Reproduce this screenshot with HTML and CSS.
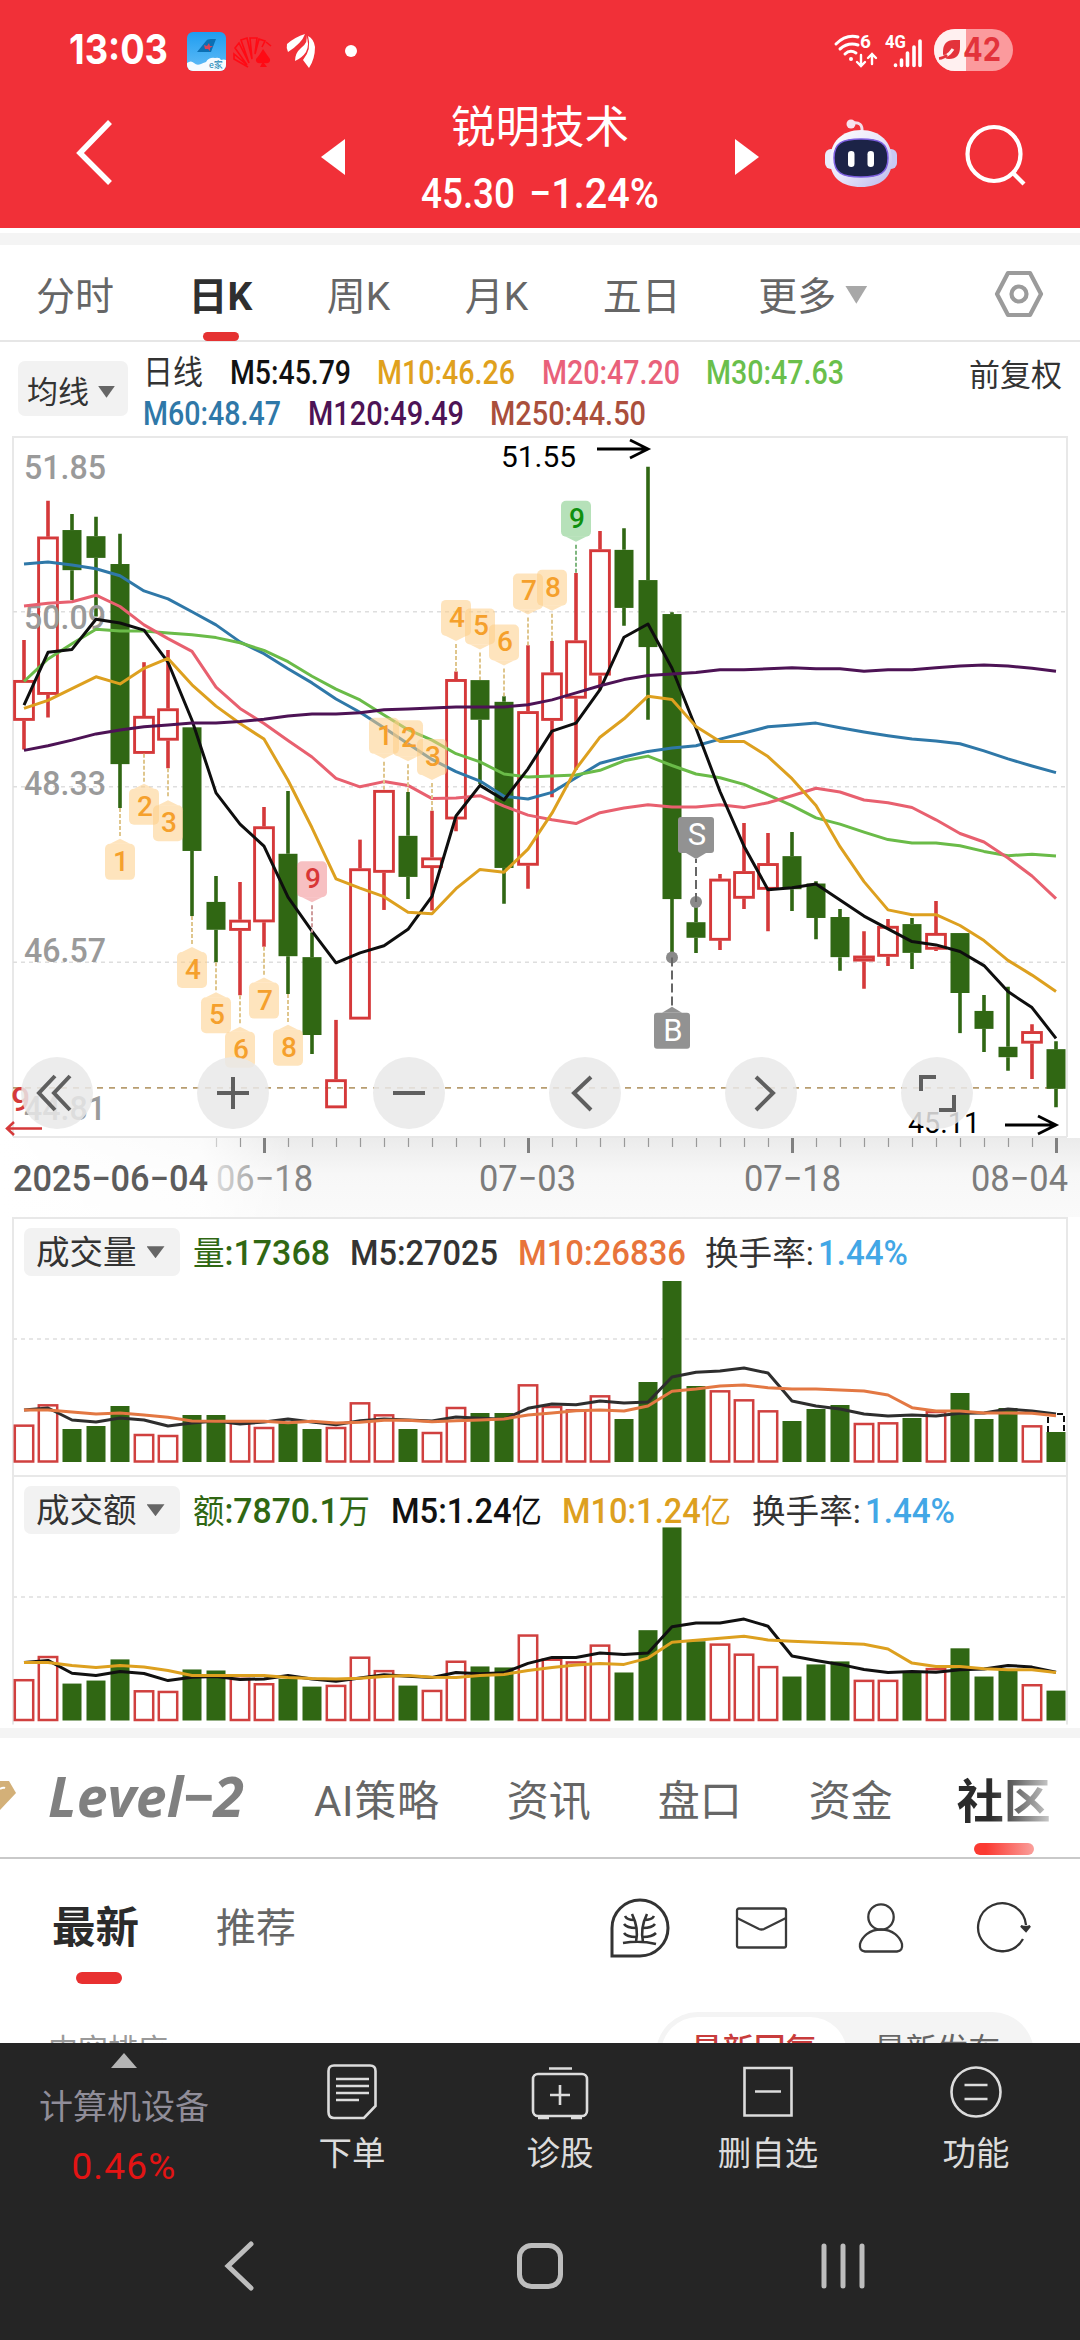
FILE: index.html
```html
<!DOCTYPE html>
<html lang="zh-CN">
<head>
<meta charset="utf-8">
<title>锐明技术 日K</title>
<link rel="stylesheet" href="styles.css">
</head>
<body>
<header class="top">
  <div class="status">
    <svg class="t clock" width="100" height="42"><text x="0" y="36" textLength="99" lengthAdjust="spacingAndGlyphs">13:03</text></svg>
    <svg class="app-icon" width="39" height="39" viewBox="0 0 39 39"><defs><linearGradient id="sky" x1="0" y1="0" x2="0" y2="1"><stop offset="0" stop-color="#1f9df0"/><stop offset="1" stop-color="#63bdf7"/></linearGradient><clipPath id="rc"><rect width="39" height="39" rx="6"/></clipPath></defs><g clip-path="url(#rc)"><rect width="39" height="39" fill="url(#sky)"/><path d="M10 20 19 9Q20 7 24 7H29L24 20Z" fill="#0b6fb4"/><path d="M17 13l3 1 2-3 1 3 3 0-3 2 0 3-2-2-3 0z" fill="#d8455a"/><path d="M0 31q4-3 7 0 3 3 7 1 2-1 5-2 3-5 9-4 5-1 6 2 3-1 5 0V39H0Z" fill="#f5fbff"/><text x="22" y="36" font-size="9" fill="#1a86b5">e家</text></g></svg>
    <svg class="fan" width="40" height="32" viewBox="0 0 40 32" fill="none" stroke="#ff0a14" stroke-width="1.600"><path d="M15 30 1 22V17L14 28 2 11 6 6 16 26 8 3 14 1 19 22 17 1H24L22 17 26 2 32 4 29 10M33 5l5 4"/><path d="M30 12Q26 19 23 22 22 27 29 26L27 30H34L31 26Q38 27 37 22 34 18 30 12Z" fill="#ff0a14" stroke="none"/></svg>
    <svg class="feather" width="29" height="34" viewBox="0 0 29 34" fill="#fff"><path d="M0 10Q8 3 18 0 15 9 1 18Q-1 14 0 10Z"/><path d="M19 1Q22 8 14 14 8 19 8 27 15 24 19 18 23 10 19 1Z"/><path d="M21 2Q27 5 28 13 28 25 22 34L16 26Q25 15 21 2Z"/></svg>
    <i class="dot"></i>
    <span class="grow"></span>
    <svg class="wifi" width="43" height="34" viewBox="0 0 43 34" fill="none" stroke="#fff" stroke-width="3" stroke-linecap="round"><path d="M2 10Q12 0 24 3M6 15Q14 8 24 11M11 20Q16 15 22 19"/><circle cx="17" cy="25" r="2" fill="#fff" stroke="none"/><path d="M27 21V31M23 28l4 4 4-4M38 30V20M34 24l4-4 4 4" stroke-width="2.4"/><text x="26" y="14" class="tiny">6</text></svg>
    <svg class="cell" width="38" height="34" viewBox="0 0 38 34"><text x="0" y="14" class="tiny" textLength="21" lengthAdjust="spacingAndGlyphs">4G</text><path d="M10.500 31v.5M16.500 26v5.500M22.500 19v12.500M29 13v18.500M35 7v24.500" stroke="#fff" stroke-width="3.600" stroke-linecap="round"/></svg>
    <svg class="battery" width="79" height="42" viewBox="0 0 79 42"><clipPath id="bc"><rect width="79" height="42" rx="21"/></clipPath><g clip-path="url(#bc)"><rect width="79" height="42" fill="#fb9a9d"/><rect width="32" height="42" fill="#fff0f0"/></g><path d="M9 23Q9 11 20 11H26V18Q26 30 15 30 10 30 9 25Z" fill="#e3333b"/><path d="M5 29Q14 28 19 20" stroke="#fff0f0" stroke-width="3" fill="none"/><path d="M5 29.500Q10 29 13 26" stroke="#e3333b" stroke-width="2.500" fill="none"/><text x="29" y="32" textLength="38" lengthAdjust="spacingAndGlyphs">42</text></svg>
  </div>
  <div class="titlebar">
    <svg class="back" width="38" height="66" viewBox="0 0 38 66"><path d="M34 2 4 33 34 63" fill="none" stroke="#fff" stroke-width="5.500"/></svg>
    <svg class="prev" width="24" height="36" viewBox="0 0 24 36"><path d="M24 0V36L0 18Z" fill="#fff"/></svg>
    <div class="title">
      <h1>锐明技术</h1>
      <svg class="t price" width="240" height="40"><text x="0" y="33" textLength="94" lengthAdjust="spacingAndGlyphs">45.30</text><text x="108" y="33" textLength="130" lengthAdjust="spacingAndGlyphs">−1.24%</text></svg>
    </div>
    <svg class="next" width="24" height="36" viewBox="0 0 24 36"><path d="M0 0V36L24 18Z" fill="#fff"/></svg>
    <svg class="robot" width="73" height="70" viewBox="0 0 73 70"><defs><linearGradient id="rb" x1="0" y1="0" x2="1" y2="1"><stop offset="0" stop-color="#fff"/><stop offset=".5" stop-color="#e8e6fa"/><stop offset="1" stop-color="#b9b8ec"/></linearGradient></defs><path d="M27 4Q38 2 37 13" fill="none" stroke="#f3dbe8" stroke-width="3"/><circle cx="26" cy="5" r="4.500" fill="#f8e3ee"/><rect x="0" y="30" width="12" height="20" rx="6" fill="#e9ecfb"/><rect x="60" y="30" width="12" height="20" rx="6" fill="#c9c9f4"/><path d="M36 11C55 11 67 23 67 41 67 59 55 68 36 68 17 68 5 59 5 41 5 23 17 11 36 11Z" fill="url(#rb)"/><path d="M36 20C55 20 63 24 63 39 63 54 55 58 36 58 17 58 9 54 9 39 9 24 17 20 36 20Z" fill="#1c2347" stroke="#7d5fe0" stroke-width="1.500"/><rect x="23" y="32" width="6.500" height="16" rx="3.200" fill="#fff"/><rect x="42.500" y="32" width="6.500" height="16" rx="3.200" fill="#fff"/></svg>
    <svg class="search" width="62" height="64" viewBox="0 0 62 64" fill="none" stroke="#fff" stroke-width="4.200"><ellipse cx="29" cy="31" rx="26.500" ry="27"/><path d="M48 50 59 61"/></svg>
  </div>
</header>
<nav class="periods">
  <span>分时</span><span class="on">日K</span><span>周K</span><span>月K</span><span>五日</span>
  <span class="more">更多<i class="caret"></i></span>
  <svg class="gear" width="50" height="48" viewBox="0 0 50 48" fill="none" stroke="#9b9b9b" stroke-width="4.200" stroke-linejoin="round"><path d="M14 3H36L47 24 36 45H14L3 24Z"/><circle cx="25" cy="24" r="7.500"/></svg>
</nav>
<section class="ma">
  <button class="drop">均线<i class="caret"></i></button>
  <div class="ma-list" id="ma"></div>
  <span class="adjust">前复权</span>
</section>
<section class="kline">
  <svg id="kline" width="1080" height="702"></svg>
  <div class="tools">
    <svg viewBox="0 0 72 72"><path d="M34 19 18 36 34 53M49 19 33 36 49 53"/></svg>
    <svg viewBox="0 0 72 72"><path d="M36 20V52M20 36H52"/></svg>
    <svg viewBox="0 0 72 72"><path d="M20 36H52"/></svg>
    <svg viewBox="0 0 72 72"><path d="M42 20 25 36 42 53"/></svg>
    <svg viewBox="0 0 72 72"><path d="M31 20 48 36 31 53"/></svg>
    <svg viewBox="0 0 72 72"><path d="M20 34V20H35M38 53H53V38"/></svg>
  </div>
</section>
<section class="axis"><svg id="axis" width="1080" height="79"></svg></section>
<section class="panel vol">
  <svg id="vol" width="1080" height="258"></svg>
  <div class="legend"><button class="drop">成交量<i class="caret"></i></button><svg class="t" id="vol-legend" width="880" height="40"></svg></div>
</section>
<section class="panel amt">
  <svg id="amt" width="1080" height="253"></svg>
  <div class="legend"><button class="drop">成交额<i class="caret"></i></button><svg class="t" id="amt-legend" width="880" height="40"></svg></div>
</section>
<nav class="sections">
  <svg class="gem" width="17" height="34" viewBox="0 0 17 34"><path d="M0 2H9L16 14 0 31Z" fill="#d3b078"/><path d="M0 10Q3 8 5 9" stroke="#fff" stroke-width="2" fill="none"/></svg>
  <svg class="t level" width="200" height="50"><text x="0" y="42" textLength="196" lengthAdjust="spacingAndGlyphs">Level−2</text></svg>
  <span>AI策略</span><span>资讯</span><span>盘口</span><span>资金</span><span class="on">社区</span>
</nav>
<section class="community">
  <div class="sub">
    <span class="on">最新</span><span>推荐</span><b class="grow"></b>
    <svg width="60" height="60" viewBox="0 0 60 60" fill="none" stroke="#333" stroke-width="3"><path d="M2 58V30A28 28 0 1 1 30 58Z"/><path d="M22 16Q29 30 26 44M37 16Q30 30 33 44M13 45Q30 42 46 46M15 18Q17 22 24 22M14 26Q17 30 26 30M14 35Q17 39 26 39M44 18Q42 22 34 22M45 26Q42 30 33 30M46 35Q42 39 33 39" stroke-width="2.600"/></svg>
    <svg width="53" height="42" viewBox="0 0 53 42" fill="none" stroke="#3a3a3a" stroke-width="2.300"><rect x="2" y="1.500" width="49" height="39" rx="2"/><path d="M2 11 24 22Q26.500 23 29 22L51 11"/></svg>
    <svg width="46" height="50" viewBox="0 0 46 50" fill="none" stroke="#3a3a3a" stroke-width="2.300"><circle cx="23" cy="14" r="12.700"/><path d="M23 26.500C11 26.500 4 34 2 41Q1 48 7 48.500H39Q45 48 44 41C42 34 35 26.500 23 26.500Z"/></svg>
    <svg width="53" height="50" viewBox="0 0 53 50" fill="none" stroke="#333" stroke-width="2.300"><path d="M45 36A24 24 0 1 1 48 22"/><path d="M43 23Q48 25 52 23L48 28Z" fill="#333"/></svg>
  </div>
  <div class="sort"><span>内容排序</span><div class="pill"><b>最新回复</b><em>最新发布</em></div></div>
</section>
<footer class="bottom">
  <div class="board"><i></i><span>计算机设备</span><strong>0.46%</strong></div>
  <div class="act"><svg width="62" height="60" viewBox="0 0 62 60"><path d="M13 3.500H49Q54.500 3.500 54.500 9V44L43 56H13Q7.500 56 7.500 50V9Q7.500 3.500 13 3.500ZM15 17H48M15 24H48M15 31H48M15 38H38"/></svg>下单</div>
  <div class="act"><svg width="62" height="60" viewBox="0 0 62 60"><rect x="4" y="12" width="54" height="42" rx="5"/><path d="M20 6.500H43M31 23V43M21 33H41M9 56H20M42 56H53"/></svg>诊股</div>
  <div class="act"><svg width="62" height="60" viewBox="0 0 62 60"><path d="M7.500 6H54.500V53.500H7.500ZM18 29.500H44"/></svg>删自选</div>
  <div class="act"><svg width="62" height="60" viewBox="0 0 62 60"><circle cx="31" cy="30" r="24.500"/><path d="M19.500 23H42.500M19.500 37H42.500"/></svg>功能</div>
</footer>
<div class="sysnav">
  <svg width="30" height="50" viewBox="0 0 30 50"><path d="M27 3 4 25 27 47"/></svg>
  <svg width="50" height="50" viewBox="0 0 50 50"><rect x="4.500" y="4.500" width="41" height="41" rx="12"/></svg>
  <svg width="50" height="50" viewBox="0 0 50 50"><path d="M6 5V45M25 5V45M44 5V45"/></svg>
</div>
<script src="charts.js"></script>
</body>
</html>
```
FILE: styles.css
```css
* { box-sizing: border-box; }
body { margin: 0; width: 1080px; height: 2340px; overflow: hidden; background: #fff; color: #666; font-family: Roboto, "Noto Sans CJK SC", sans-serif; }
svg { display: block; flex: none; overflow: visible; }
button { font: inherit; border: 0; margin: 0; }
.grow { flex: 1; }
.t text { fill: currentColor; }

.top { height: 228px; background: #f13038; color: #fff; overflow: hidden; }
.status { display: flex; height: 102px; padding: 0 67px 0 69px; align-items: center; }
.clock { font: 700 41px Inter, sans-serif; margin-top: -4px; }
.app-icon { margin-left: 18px; }
.fan { margin-left: 7px; margin-top: 4px; }
.feather { margin-left: 14px; }
.dot { width: 12px; height: 12px; border-radius: 50%; background: #fff; margin-left: 29px; }
.wifi { margin-right: 8px; }
.tiny { font: 700 19px Roboto; fill: #fff; stroke: none; }
.cell { margin-right: 11px; }
.battery { font: 700 32px Inter, sans-serif; fill: #e3333b; margin-top: -2px; }
.titlebar { display: flex; height: 126px; padding-left: 76px; }
.back { margin-top: 18px; }
.prev { margin: 37px 0 0 207px; }
.title { width: 390px; text-align: center; }
.title h1 { font-size: 44.500px; font-weight: 400; line-height: 50px; margin: 1px 0 0; }
.price { font: 500 42.500px Roboto; margin: 22px 0 0 76px; }
.next { margin-top: 37px; }
.robot { margin: 17px 0 0 66px; }
.search { margin: 21px 0 0 67px; }

.periods { display: flex; gap: 74.500px; height: 114px; padding: 28px 0 0 36px; border-bottom: 2px solid #e6e6e6; box-shadow: inset 0 5px #fff, inset 0 17px #f4f4f4; font-size: 39px; line-height: 82px; }
.periods .on { color: #2f2f2f; font-weight: 700; position: relative; }
.periods .on::after { content: ""; position: absolute; left: 14px; bottom: -1px; width: 36px; height: 9px; border-radius: 5px; background: #e53232; }
.caret { display: inline-block; width: 18px; height: 12px; background: #666; clip-path: polygon(0 0, 100% 0, 50% 100%); vertical-align: middle; }
.periods .more { margin-left: 3px; }
.periods .caret { width: 22px; height: 18px; background: #a8a8a8; margin-left: 9px; margin-top: -10px; }
.gear { margin: 14px 0 0 52px; }

.ma { display: flex; height: 94px; padding-left: 18px; font-size: 31px; color: #333; }
.drop { background: #f2f2f2; border-radius: 7px; color: #333; white-space: nowrap; }
.ma .drop { width: 110px; height: 55px; margin-top: 19px; padding: 2px 0 0 9px; text-align: left; }
.ma .caret { margin: -6px 0 0 9px; width: 17px; }
.ma-list { width: 826px; margin-left: 15px; padding-top: 12px; display: flex; flex-wrap: wrap; align-content: flex-start; gap: 0 26.500px; }
.ma-list svg { font: 500 33.500px Roboto, "Noto Sans CJK SC", sans-serif; }
.adjust { line-height: 46px; padding-top: 11px; white-space: nowrap; }

.kline { height: 702px; position: relative; }
.tools { position: absolute; left: 21px; top: 621px; display: flex; gap: 104px; }
.tools svg { width: 72px; height: 72px; border-radius: 50%; background: rgba(233, 233, 233, .85); fill: none; stroke: #5f5f5f; stroke-width: 4; }
.lab { font: 500 34px Roboto; fill: #9a9a9a; }
.mark { font: 400 30px Roboto; fill: #000; }
.badge { font: 500 28px Roboto; text-anchor: middle; }
.axis { height: 79px; background: linear-gradient(90deg, #fff 0, rgba(255, 255, 255, .8) 200px, rgba(255, 255, 255, 0) 290px), linear-gradient(#ebebeb, #f7f7f7 45%, #fafafa); }
.axis text { font: 400 36px Roboto; fill: #7c7c7c; }
.axis .first { fill: #5c5c5c; font-weight: 500; }
.panel { display: grid; }
.panel > * { grid-area: 1 / 1; }
.vol { height: 258px; }
.amt { height: 253px; }
.legend { display: flex; height: 60px; padding: 11px 0 0 24px; font-size: 33.500px; color: #333; }
.legend .drop { width: 156px; height: 48px; padding: 0 0 0 12px; text-align: left; line-height: 50px; }
.legend .caret { margin: -6px 0 0 10px; }
.legend svg { margin-left: 13px; margin-top: 3px; font: 500 35.500px Roboto, "Noto Sans CJK SC", sans-serif; }
.legend .cn, .ma-list .cn { font-weight: 400; font-size: 33px; }

.sections { display: flex; height: 131px; border-top: 10px solid #f4f4f4; border-bottom: 2px solid #c9c9c9; font-size: 42px; line-height: 128px; white-space: nowrap; gap: 67px; }
.gem { margin-top: 41px; }
.level { font: italic 700 55px "Open Sans"; color: #808080; margin: 37px 0 0 -36px; }
.sections .on { font-size: 47px; font-weight: 700; margin-left: -3px; position: relative; color: transparent; background: linear-gradient(90deg, #2b2b2b 35%, #555 55%, #ccc 100%); background-clip: text; -webkit-background-clip: text; }
.sections .on::after { content: ""; position: absolute; left: 17px; bottom: 2px; width: 60px; height: 12px; border-radius: 6px; background: linear-gradient(90deg, #fb3a32 20%, #faa09c); }
.level + span { margin-left: -1px; letter-spacing: .7px; }

.community { height: 184px; overflow: hidden; }
.sub { display: flex; height: 139px; align-items: center; padding: 0 49px 0 52px; font-size: 40px; }
.sub span { line-height: 134px; }
.sub .on { font-size: 43.500px; font-weight: 700; color: #2b2b2b; position: relative; margin-right: 77px; }
.sub .on::after { content: ""; position: absolute; left: 24px; bottom: 12px; width: 46px; height: 12px; border-radius: 6px; background: #e83030; }
.sub svg { margin-top: -1px; margin-left: 70px; }
.sub svg + svg { margin-left: 65px; }
.sub svg:nth-of-type(3) { margin-left: 70px; }
.sub svg:last-child { margin-left: 74px; }
.sort { display: flex; justify-content: space-between; padding: 14px 46px 0 48px; font-size: 30px; color: #999; }
.pill { display: flex; width: 378px; height: 84px; padding: 5px; border-radius: 42px; background: #f4f4f4; font-size: 31.500px; line-height: 68px; }
.pill b { width: 186px; height: 74px; background: #fff; border-radius: 37px; text-align: center; font-weight: 500; color: #c83c3c; }
.pill em { flex: 1; padding-left: 27px; font-style: normal; color: #666; }
.sort > span { line-height: 76px; }

.bottom { display: grid; grid-template-columns: 248px 208px 208px 208px 208px; height: 165px; background: #252525; color: #dcdcdc; position: relative; }
.board { display: flex; flex-direction: column; align-items: center; padding-top: 10px; color: #908d99; font-size: 34px; line-height: 48px; }
.board i { width: 26px; height: 15px; background: #b5b5b5; clip-path: polygon(50% 0, 100% 100%, 0 100%); }
.board span { margin-top: 15px; }
.board strong { font-weight: 400; font-size: 37px; letter-spacing: 1.2px; color: #e31414; margin-top: 12px; }
.act { display: flex; flex-direction: column; align-items: center; font-size: 33.500px; line-height: 40px; padding-top: 19px; }
.act svg { margin-bottom: 12px; fill: none; stroke: #dcdcdc; stroke-width: 2.600; }
.sysnav { height: 132px; background: #252525; display: flex; padding: 33px 0 0 224px; }
.sysnav svg { fill: none; stroke: #bdbdbd; stroke-width: 5; stroke-linecap: round; }
.sysnav svg:nth-child(2) { margin-left: 261px; }
.sysnav svg:nth-child(3) { margin-left: 253px; }
```
FILE: charts.js
```js
// Draws the candlestick, volume and turnover charts.
const RED = '#d5393a', GREEN = '#306713';
const cx = i => 24 + 24 * i;
const $ = id => document.getElementById(id);

// [rising, wick top, body top, body bottom, wick bottom]
const candles = [
  [1,445,530,616,677],[1,150,226,561,609],[0,178,212,297,360],[0,184,225,271,395],[0,220,284,708,801],
  [1,492,606,686,686],[1,466,590,658,717],[0,630,630,892,1030],[0,945,1000,1059,1128],[1,958,1038,1061,1198],
  [1,799,840,1043,1095],[0,765,898,1115,1195],[0,1065,1117,1282,1322],[1,1250,1376,1437,1437],[1,868,929,1249,1249],
  [1,763,763,938,1017],[0,767,860,947,994],[1,807,906,928,1018],[1,512,528,825,850],[0,530,530,614,750],
  [0,564,576,928,1004],[1,456,596,923,972],[1,447,514,616,778],[1,303,446,569,720],[1,214,253,520,550],
  [0,208,254,377,415],[0,78,318,460,614],[0,386,390,994,1118],[0,1000,1043,1076,1108],[1,941,951,1082,1102],
  [1,833,935,993,1015],[1,854,918,974,1062],[0,852,903,973,1019],[0,956,961,1034,1079],[0,1015,1032,1117,1146],
  [1,1062,1114,1126,1184],[1,1036,1051,1116,1136],[0,1034,1047,1108,1142],[1,998,1066,1101,1104],[0,1066,1066,1193,1278],
  [0,1197,1231,1269,1318],[0,1180,1307,1329,1358],[1,1259,1274,1300,1375],[0,1295,1312,1396,1435]];
const averages = {
  '#2f78a8': [284,280,286,294,309,341,358,385,413,449,474,506,536,570,598,631,665,698,724,744,776,782,768,737,706,693,681,674,669,655,642,629,625,621,631,640,648,655,659,665,680,697,712,726],
  '#6abb48': [533,485,453,422,426,426,430,434,440,451,467,491,522,549,572,604,635,657,686,703,729,735,733,731,721,701,691,711,729,737,751,773,796,822,835,852,868,875,875,881,893,902,899,903],
  '#e8606f': [373,367,364,350,374,413,442,469,545,590,622,658,693,738,756,745,753,781,780,775,797,816,826,834,811,801,794,799,799,794,800,790,775,759,767,784,790,800,826,855,873,907,945,993],
  '#0e0e0e': [583,471,465,401,409,424,492,615,769,835,882,990,1062,1129,1108,1093,1058,988,818,753,784,718,638,621,550,439,411,505,632,766,882,974,970,962,996,1030,1057,1084,1091,1105,1135,1190,1224,1289],
  '#dda01f': [590,573,548,523,538,505,484,540,585,622,655,742,843,951,971,989,1022,1025,972,931,937,888,812,718,651,612,564,571,628,660,660,692,739,796,883,957,1017,1027,1027,1050,1082,1124,1155,1190],
  '#4d1355': [679,669,657,644,636,629,625,621,621,618,613,606,602,602,599,593,591,589,587,587,587,582,572,557,542,529,520,517,514,508,508,506,504,506,506,511,508,508,504,500,498,500,505,511]
};
const line = (vals, y, color, w = 3) =>
  `<polyline fill="none" stroke="${color}" stroke-width="${w}" stroke-linejoin="round" points="${vals.map((v, i) => cx(i) + ',' + y(v).toFixed(1)).join(' ')}"/>`;
const frame = (top, bottom) => `<path d="M13 ${bottom}V${top}H1067V${bottom}" fill="none" stroke="#e8e8e8" stroke-width="2"/>`;
const fit = (x, y, w, s, extra = '') => `<text x="${x}" y="${y}" textLength="${w}" lengthAdjust="spacingAndGlyphs" ${extra}>${s}</text>`;

function drawKline() {
  const y = v => v / 2.119 - 6;
  let s = frame(1, 701) + '<path d="M13 701H1067" stroke="#e8e8e8" stroke-width="2"/>';
  for (const g of [385, 756, 1128]) s += `<path d="M13 ${y(g)}H1066" stroke="#dedede" stroke-width="1.500" stroke-dasharray="4 4"/>`;
  s += `<path d="M13 ${y(1394)}H1066" stroke="#b89d70" stroke-width="1.600" stroke-dasharray="6 6"/>`;
  candles.forEach(([up, a, b, c, d], i) => {
    const x = cx(i), col = up ? RED : GREEN;
    s += `<path d="M${x} ${y(a)}V${y(b)}M${x} ${y(c)}V${y(d)}" stroke="${col}" stroke-width="3.600"/>`;
    s += up ? `<rect x="${x - 9.4}" y="${y(b) + 1.3}" width="18.800" height="${y(c) - y(b) - 2.6}" fill="none" stroke="${RED}" stroke-width="2.900"/>`
            : `<rect x="${x - 9.5}" y="${y(b)}" width="19" height="${y(c) - y(b)}" fill="${GREEN}"/>`;
  });
  // Price scale
  [['51.85', 43], ['50.09', 193], ['48.33', 359], ['46.57', 526], ['44.81', 684]].forEach(([t, py]) => {
    s += fit(24, py, 82, t, 'class="lab"');
  });
  for (const c in averages) s += line(averages[c], y, c);
  // Nine-turn sequence badges: [candle, label, box top, below the bar]
  [[4,1,877,1],[5,2,760,1],[6,3,795,1],[7,4,1106,1],[8,5,1202,1],[9,6,1275,1],[10,7,1171,1],[11,8,1271,1],
   [12,9,914,0],[15,1,610,0],[16,2,615,0],[17,3,655,0],[18,4,360,0],[19,5,378,0],[20,6,412,0],[21,7,304,0],[22,8,296,0],[23,9,150,0]
  ].forEach(([i, n, t, below]) => {
    const x = cx(i), top = y(t), kind = n < 9 ? 0 : i === 12 ? 1 : 2;
    const bg = ['rgba(253,205,134,.55)', 'rgba(240,130,134,.5)', 'rgba(110,195,115,.5)'][kind];
    const fg = ['#f5a02c', '#d93636', '#0f900f'][kind];
    const dash = ['#dfc68d', '#cf9c9c', '#7fb67f'][kind];
    const from = below ? y(candles[i][4]) : top + 44, to = below ? top - 7 : y(candles[i][1]);
    const tip = below ? `M${x - 10} ${top}L${x} ${top - 5}L${x + 10} ${top}` : `M${x - 10} ${top + 36}L${x} ${top + 41}L${x + 10} ${top + 36}`;
    s += `<path d="M${x} ${from}V${to}" stroke="${dash}" stroke-width="2" stroke-dasharray="4 2"/>`;
    s += `<rect x="${x - 15}" y="${top}" width="30" height="36" rx="5" fill="${bg}"/><path d="${tip}" fill="${bg}"/>`;
    s += `<text class="badge" x="${x + 1}" y="${top + 27}" fill="${fg}">${n}</text>`;
  });
  // Buy and sell points
  [['B', 27, 1235, 1118], ['S', 28, 820, 1000]].forEach(([n, i, t, dot]) => {
    const x = cx(i), top = y(t), b = n === 'B';
    s += `<circle cx="${x}" cy="${y(dot)}" r="6" fill="#8a8a8a"/><path d="M${x} ${y(dot)}V${b ? top - 6 : top + 42}" stroke="#666" stroke-width="2" stroke-dasharray="9 4"/>`;
    s += `<rect x="${x - 18}" y="${top}" width="36" height="36" rx="3" fill="#929292"/>`;
    s += b ? `<path d="M${x - 10} ${top}l10-6 10 6" fill="#929292"/>` : `<path d="M${x - 10} ${top + 36}l10 6 10-6" fill="#929292"/>`;
    s += `<text class="badge" x="${x + 1}" y="${top + 28}" fill="#fff" style="font-weight:400;font-size:31px">${n}</text>`;
  });
  s += fit(501, 31, 75, '51.55', 'class="mark"') + fit(908, 697, 72, '45.11', 'class="mark"');
  s += '<path d="M597 13H648M630 4 648 13 630 22M1005 689H1056M1038 680 1056 689 1038 698" fill="none" stroke="#000" stroke-width="2.800"/>';
  s += `<text x="11" y="675" class="mark" style="fill:${RED};font-weight:500;font-size:34px">9</text><path d="M42 692.500H8M14 686 7 692.500 14 699" fill="none" stroke="${RED}" stroke-width="2.500"/>`;
  $('kline').innerHTML = s;
}

function drawAxis() {
  let s = '';
  for (let x = 216; x <= 1056; x += 24) {
    const big = (x - 264) % 264 === 0;
    s += `<path d="M${x + .5} 0V${big ? 15 : 9}" stroke="${big ? '#808080' : x === 216 ? '#ccc' : '#999'}" stroke-width="${big ? 3 : 1.2}"/>`;
  }
  s += '<defs><linearGradient id="fade"><stop offset="0" stop-color="#ddd"/><stop offset=".5" stop-color="#999"/><stop offset="1" stop-color="#7c7c7c"/></linearGradient></defs>';
  s += fit(13, 53, 195, '2025−06−04', 'class="first"') + fit(216, 53, 97, '06−18', 'style="fill:url(#fade)"');
  s += fit(479, 53, 97, '07−03') + fit(744, 53, 97, '07−18') + fit(971, 53, 97, '08−04');
  $('axis').innerHTML = s;
}

function drawBars(id, y, base, mid, tops, m5, m10, c5, c10) {
  let s = frame(1, base + (id === 'vol' ? 13 : 4)) + `<path d="M13 ${mid}H1066" stroke="#e6e6e6" stroke-width="2" stroke-dasharray="4 4"/>`;
  tops.forEach((v, i) => {
    const x = cx(i), t = y(v);
    s += candles[i][0] ? `<rect x="${x - 9.2}" y="${t + 1}" width="18.400" height="${base - t - 1.500}" fill="none" stroke="#d0403f" stroke-width="2.500"/>`
                       : `<rect x="${x - 9.5}" y="${t}" width="19" height="${base - t}" fill="${GREEN}"/>`;
  });
  if (id === 'vol') s += `<path d="M1048 ${y(906)}V${y(852)}H1064V${y(906)}" fill="none" stroke="#111" stroke-width="2" stroke-dasharray="6 3"/>`;
  $(id).innerHTML = s + line(m5, y, c5) + line(m10, y, c10);
}

drawKline();
drawAxis();
drawBars('vol', v => v / 3 - 87, 245, 122,
  [884,823,897,888,828,912,915,855,855,876,891,880,897,891,817,853,897,906,831,849,849,763,828,838,796,867,756,453,768,781,808,841,873,837,825,879,877,864,843,789,867,834,886,906],
  [840,834,870,876,864,870,888,879,873,882,876,867,876,884,872,867,870,873,861,865,868,835,822,824,813,819,816,741,727,723,714,729,813,828,837,852,858,855,858,850,849,837,843,852],
  [840,840,846,852,849,855,862,873,874,874,874,878,874,879,877,871,871,875,872,870,867,855,849,842,840,843,828,784,777,768,765,773,777,777,780,783,795,833,843,843,849,849,850,857],
  '#2e2e2e', '#e37843');
drawBars('amt', v => v / 2.978 - 6, 245.5, 122,
  [626,557,639,630,567,659,661,597,600,622,638,625,648,643,559,599,645,658,571,588,591,493,565,573,523,606,480,174,513,520,550,587,618,582,573,628,628,606,593,534,618,596,641,660],
  [576,570,608,615,603,609,630,620,618,627,625,615,625,632,622,613,617,621,606,610,607,579,561,561,548,552,548,470,459,459,447,468,557,570,582,597,606,603,605,598,596,585,590,605],
  [576,576,585,591,585,590,600,615,615,615,615,621,624,625,623,618,615,620,621,615,612,600,591,584,579,582,563,516,510,504,498,509,513,516,519,522,536,578,588,588,595,598,598,606],
  '#111', '#dda01f');

$('ma').innerHTML = [['日线', 60, '#333'], ['M5:45.79', 121, '#111'], ['M10:46.26', 138, '#e0a11d'], ['M20:47.20', 138, '#e9617a'],
  ['M30:47.63', 138, '#6abf4b'], ['M60:48.47', 138, '#2f78a8'], ['M120:49.49', 156, '#4d1355'], ['M250:44.50', 156, '#aa4f3c']]
  .map(([t, w, c], i) => `<svg class="t" style="color:${c}" width="${w}" height="41">${fit(0, i ? 29.5 : 30, w, t, i ? '' : 'class="cn"')}</svg>`).join('');

const legend = (id, items) => { $(id).innerHTML = items.map(([x, w, t, c, cn]) => fit(x - 193, 34, w, t, `style="fill:${c}" ${cn ? 'class="cn"' : ''}`)).join(''); };
const cn = s => `<tspan class="cn">${s}</tspan>`;
legend('vol-legend', [[193, 137, cn('量') + ':17368', GREEN], [350, 148, 'M5:27025', '#333'], [518, 168, 'M10:26836', '#e8743b'], [705, 109, '换手率:', '#333', 1], [818, 90, '1.44%', '#42a7e6']]);
legend('amt-legend', [[193, 177, cn('额') + ':7870.1' + cn('万'), GREEN], [391, 151, 'M5:1.24' + cn('亿'), '#111'], [562, 169, 'M10:1.24' + cn('亿'), '#dda01f'], [752, 109, '换手率:', '#333', 1], [865, 90, '1.44%', '#42a7e6']]);
```
